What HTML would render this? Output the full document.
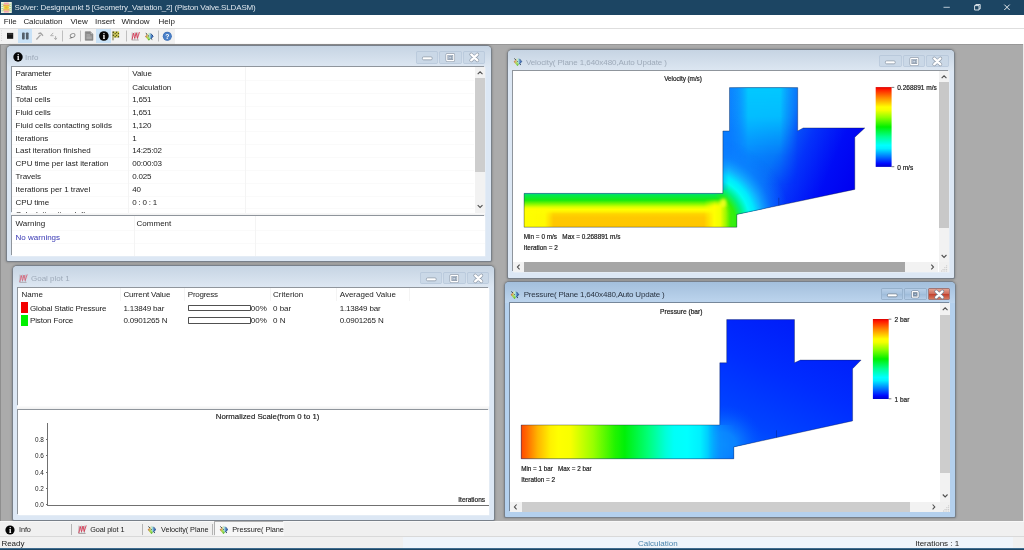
<!DOCTYPE html>
<html>
<head>
<meta charset="utf-8">
<title>Solver</title>
<style>
*{box-sizing:border-box;margin:0;padding:0}
html,body{width:1024px;height:550px;overflow:hidden;background:#ababab;font-family:"Liberation Sans",sans-serif;font-size:8px;color:#222}
#app{position:absolute;left:0;top:0;width:1024px;height:550px;overflow:hidden;background:#ababab;will-change:transform}
.a{position:absolute}
.tx{position:absolute;white-space:pre;line-height:10px;font-size:8px;color:#1c1c1c}
.ar{font-family:"Liberation Sans",sans-serif}
#titlebar{position:absolute;left:0;top:0;width:1024px;height:15px;background:#1c4563}
#menubar{position:absolute;left:0;top:15px;width:1024px;height:13.5px;background:#fff}
#toolbar{position:absolute;left:0;top:28.4px;width:1024px;height:15.2px;background:#fff;border-top:0.8px solid #dedede}
#tbline{position:absolute;left:0;top:43.5px;width:1024px;height:1.8px;background:linear-gradient(#8f8f8f,#a0a0a0)}
#tabs{position:absolute;left:0;top:521.4px;width:1024px;height:15.1px;background:#f0f0f0;border-top:1px solid #f8f8f8}
#status{position:absolute;left:0;top:536px;width:1024px;height:12.5px;background:#f0f0f0;border-top:1px solid #d9d9d9}
#bottomline{position:absolute;left:0;top:548.3px;width:1024px;height:1.7px;background:linear-gradient(#5d8cb3,#1c4563 55%)}
.win{position:absolute;border-radius:4.5px 4.5px 1px 1px;box-shadow:0 0 0 0.9px #78808a, 0 0.4px 2.4px 0.6px rgba(0,0,0,.3)}
.cap{position:absolute;left:0;top:0;right:0;height:21px;border-radius:4px 4px 0 0}
.inact{background:#dce7f4}
.capi{background:linear-gradient(#c6d4e3,#dde7f2)}
.act{background:#b4d0ed}
.capa{background:linear-gradient(#a3bfdc,#bdd5ee)}
.pane{position:absolute;background:#fff;box-shadow:-1px -1px 0 0 #8f959c, 0.6px 0.6px 0 0 #e9eef5;overflow:hidden}
.wb{position:absolute;height:10.8px;width:20.6px;border-radius:0.5px}
.wbi{background:#cad8e7;box-shadow:0 0 0 0.7px #b3c4d8}
.wba{background:linear-gradient(#b8cfe8,#a5c1de 50%,#9dbbd9 51%,#b5cde8);box-shadow:0 0 0 0.7px #8fa9c4}
.wba.cl{background:linear-gradient(#e2a393,#cf6a58 48%,#c2402e 52%,#d67a5e);box-shadow:0 0 0 0.7px #9c5b52}
.wb svg{position:absolute;left:0;top:0;width:100%;height:100%;overflow:visible}
.vl{position:absolute;width:1px;background:#f4f4f4}
.hl{position:absolute;height:1px;background:#fafafa}
.sbv{position:absolute;background:#f2f2f2}
.sbh{position:absolute;background:#f2f2f2}
.thumb{position:absolute;background:#cdcdcd}
</style>
</head>
<body>
<div id="app">
<div id="titlebar">
  <svg class="a" style="left:1.1px;top:1.9px" width="10.8" height="11.2" viewBox="0 0 21.6 22.4">
    <rect x="0" y="0" width="21.6" height="22.4" fill="#eef3e4"/>
    <g fill="#a9d99a"><rect x="0.8" y="3.4" width="20" height="2.2"/><rect x="0.8" y="7.8" width="20" height="2.2"/><rect x="0.8" y="12.2" width="20" height="2.2"/><rect x="0.8" y="16.6" width="20" height="2.2"/></g>
    <rect x="5" y="1" width="11.6" height="20.4" fill="#f3e7b0" opacity="0.85"/>
    <rect x="6" y="1.4" width="9.6" height="3.4" fill="#f2a2b4"/>
    <rect x="6" y="17.6" width="9.6" height="3.4" fill="#f2a2b4"/>
    <rect x="4.4" y="5.4" width="12.8" height="2.6" fill="#eda65c"/>
    <rect x="4.4" y="14.4" width="12.8" height="2.6" fill="#eda65c"/>
    <ellipse cx="10.8" cy="11.2" rx="5.4" ry="4" fill="#ecd23e"/>
    <ellipse cx="10.8" cy="11.2" rx="2.6" ry="2" fill="#e8b636"/>
  </svg>
  <span class="tx" style="left:14.6px;top:3.3px;color:#dde5ec;letter-spacing:-0.15px">Solver: Designpunkt 5 [Geometry_Variation_2] (Piston Valve.SLDASM)</span>
  <svg class="a" style="left:930px;top:0" width="94" height="15" viewBox="0 0 94 15">
    <path d="M13.5 7.3 H19.8" stroke="#c9d6e0" stroke-width="0.9" fill="none"/>
    <path d="M44.6 5.6 H49 V10 H44.6 Z M45.8 5.6 V4.5 H50.2 V8.9 H49" stroke="#e8eef3" stroke-width="0.9" fill="none"/>
    <path d="M74.3 4.6 L79.7 10 M79.7 4.6 L74.3 10" stroke="#f2f5f8" stroke-width="0.95" fill="none"/>
  </svg>
</div>
<div id="menubar">
  <span class="tx" style="left:3.8px;top:2.2px">File</span>
  <span class="tx" style="left:23.4px;top:2.2px;letter-spacing:-0.05px">Calculation</span>
  <span class="tx" style="left:70.6px;top:2.2px">View</span>
  <span class="tx" style="left:95px;top:2.2px">Insert</span>
  <span class="tx" style="left:121.6px;top:2.2px;letter-spacing:-0.1px">Window</span>
  <span class="tx" style="left:158.6px;top:2.2px">Help</span>
</div>
<div id="toolbar">
  <div class="a" style="left:0;top:0;width:175.4px;height:14.6px;background:#f2f2f2"></div>
  <div class="a" style="left:18.3px;top:0px;width:14px;height:13.6px;background:#c9e2f7"></div>
  <div class="a" style="left:96.4px;top:0px;width:14.6px;height:13.6px;background:#c9e2f7"></div>
  <svg class="a" style="left:0;top:-1px" width="180" height="15" viewBox="0 28.5 180 15">
    <!-- grip -->
    <g fill="#c8c8c8"><rect x="1.2" y="31" width="0.8" height="0.8"/><rect x="1.2" y="33.4" width="0.8" height="0.8"/><rect x="1.2" y="35.8" width="0.8" height="0.8"/><rect x="1.2" y="38.2" width="0.8" height="0.8"/><rect x="1.2" y="40.6" width="0.8" height="0.8"/></g>
    <!-- stop -->
    <rect x="7" y="33.4" width="6.2" height="5.9" fill="#161616"/>
    <rect x="7.6" y="34" width="5" height="1.2" fill="#3a3a3a"/>
    <!-- pause -->
    <rect x="22" y="33" width="2.7" height="7" rx="0.8" fill="#55606b"/>
    <rect x="25.9" y="33" width="2.7" height="7" rx="0.8" fill="#55606b"/>
    <!-- hammer -->
    <path d="M36.4 40 L40.6 35.3" stroke="#a3a3a3" stroke-width="1.2" fill="none"/>
    <path d="M38.3 34.2 L40.6 33.6 L43 36.2" stroke="#a3a3a3" stroke-width="1.3" fill="none"/>
    <!-- arrows -->
    <path d="M53.2 33.4 L50.6 36.2 L53.6 36.2" stroke="#b0b0b0" stroke-width="1" fill="none"/>
    <path d="M55.6 36.6 L55.6 40 M54.2 38.4 L55.6 40.2 L57 38.4" stroke="#b0b0b0" stroke-width="1" fill="none"/>
    <!-- sep -->
    <rect x="62" y="31" width="0.9" height="11" fill="#b9b9b9"/>
    <!-- eraser -->
    <ellipse cx="72.6" cy="36" rx="2.5" ry="1.8" transform="rotate(-30 72.6 36)" fill="none" stroke="#8d8d8d" stroke-width="0.9"/>
    <path d="M69 39.3 L71.6 37.2 L72.4 38.4 Z" fill="#6f6f6f"/>
    <rect x="80.1" y="31" width="0.9" height="11" fill="#b9b9b9"/>
    <!-- doc -->
    <path d="M85.3 32.2 H90.4 L92.9 34.7 V40.8 H85.3 Z" fill="#8b8b8b" stroke="#6a6a6a" stroke-width="0.5"/>
    <path d="M90.4 32.2 V34.7 H92.9" fill="#c9c9c9" stroke="#6a6a6a" stroke-width="0.4"/>
    <g stroke="#c6c6c6" stroke-width="0.6"><path d="M86.4 35.3H90M86.4 36.6H91.8M86.4 37.9H91.8M86.4 39.2H91.8"/></g>
    <!-- info -->
    <circle cx="103.9" cy="36.5" r="4.8" fill="#050505"/>
    <text x="104" y="39.5" font-family="Liberation Serif, serif" font-weight="bold" font-size="8.6" fill="#fff" text-anchor="middle">i</text>
    <!-- flag -->
    <g fill="#55560e">
      <rect x="112.7" y="32" width="1.6" height="1.5"/><rect x="115.9" y="32" width="1.6" height="1.5"/>
      <rect x="114.3" y="33.5" width="1.6" height="1.5"/><rect x="117.5" y="33.5" width="1.6" height="1.5"/>
      <rect x="112.7" y="35" width="1.6" height="1.5"/><rect x="115.9" y="35" width="1.6" height="1.5"/>
      <rect x="114.3" y="36.5" width="1.6" height="1.5"/><rect x="117.5" y="36.5" width="1.6" height="1.5"/>
      <rect x="112.6" y="32" width="0.8" height="8.8"/>
    </g>
    <g fill="#cfc83a">
      <rect x="114.3" y="32" width="1.6" height="1.5"/><rect x="117.5" y="32" width="1.6" height="1.5"/>
      <rect x="113.4" y="33.5" width="0.9" height="1.5"/><rect x="115.9" y="33.5" width="1.6" height="1.5"/>
      <rect x="114.3" y="35" width="1.6" height="1.5"/><rect x="117.5" y="35" width="1.6" height="1.5"/>
      <rect x="113.4" y="36.5" width="0.9" height="1.5"/><rect x="115.9" y="36.5" width="1.6" height="1.5"/>
    </g>
    <rect x="126" y="31" width="0.9" height="11" fill="#b9b9b9"/>
    <!-- goal plot icon -->
    <svg x="131.2" y="32.2" width="9" height="9" viewBox="0 0 9 9">
      <path d="M0.9 0.6V8.2M3.6 0.6V8.2M6.4 0.6V8.2" stroke="#9a9094" stroke-width="0.55" fill="none"/>
      <path d="M0.8 8 L2.2 1.4 L3.5 6.6 L5 1 L6.2 6.6 L8.2 0.4" stroke="#d43c56" stroke-width="0.95" fill="none" stroke-linejoin="round"/>
      <path d="M0.6 4.4 L2.4 4 L4.4 5.2 L6.2 3.4 L8.2 3" stroke="#e58a9a" stroke-width="0.6" fill="none"/>
      <path d="M0.4 8.4 H7.6" stroke="#8a7e82" stroke-width="0.7"/>
    </svg>
    <!-- results icon -->
    <svg x="144.4" y="32.2" width="9.4" height="9.4" viewBox="0 0 9.4 9.4">
      <defs><linearGradient id="rg0" x1="0" y1="0" x2="1" y2="0"><stop offset="0" stop-color="#a85828"/><stop offset="0.2" stop-color="#e0a050"/><stop offset="0.42" stop-color="#dcecc4"/><stop offset="0.6" stop-color="#98dcd8"/><stop offset="0.8" stop-color="#4878c8"/><stop offset="1" stop-color="#2848a8"/></linearGradient></defs>
      <path d="M0.7 4.7 L4.5 0.7 L8.6 4.7 L4.5 8.9 Z" fill="url(#rg0)"/>
      <path d="M1.8 5.8 L4.5 8.9 L6 7.2 L3.6 4.6 Z" fill="#9cd848" opacity="0.85"/><path d="M3.2 7.4 L4.5 8.9 L5.6 7.6 Z" fill="#48b030" opacity="0.9"/>
      <path d="M1.4 1.6 L2.8 2.8 M3.8 4 L4.6 4.6 M6.8 7 L7.8 7.8" stroke="#1e2a26" stroke-width="1" fill="none"/>
      <path d="M6.4 1.8 L8.8 4.6 L6.8 6.6 M7.4 7.4 L6.6 6.6" stroke="#1d4a86" stroke-width="1" fill="none"/>
    </svg>
    <rect x="158" y="31" width="0.9" height="11" fill="#b9b9b9"/>
    <!-- help -->
    <circle cx="167.3" cy="36.8" r="4.5" fill="#3b6db3"/>
    <circle cx="167.3" cy="36.8" r="3.9" fill="#4a80c8"/>
    <text x="167.3" y="39.3" font-size="6.8" font-weight="bold" fill="#fff" text-anchor="middle" font-family="Liberation Sans, sans-serif">?</text>
  </svg>
</div>
<div id="tbline"></div>

<div class="a" id="lcol" style="left:0;top:45px;width:1.1px;height:476px;background:#8e8e8e"></div>
<div class="a" style="left:1023.2px;top:44px;width:0.8px;height:477px;background:#ececec"></div>

<!-- Info window -->
<div class="win inact" style="left:6.75px;top:46.1px;width:483.95px;height:214.80px"><div class="cap capi"></div></div>
<svg class="a" style="left:11.5px;top:51.2px" width="12" height="12" viewBox="-6 -6 12 12"><circle cx="0" cy="0" r="4.7" fill="#050505"/><text x="0.1" y="3" font-family="Liberation Serif, serif" font-weight="bold" font-size="8.6" fill="#fff" text-anchor="middle">i</text></svg>
<span class="tx" style="left:25px;top:53.00px;color:#9eaab9">Info</span>
<div class="wb wbi" style="left:416.70px;top:52.00px"><svg viewBox="0.5 0.75 20.6 10.8"><rect x="5.9" y="5.6" width="9.8" height="3" rx="1.2" fill="#fff" stroke="#8d99a8" stroke-width="0.8"/></svg></div>
<div class="wb wbi" style="left:440.20px;top:52.00px"><svg viewBox="0.5 0.75 20.6 10.8"><rect x="7.3" y="3.1" width="7" height="6.2" rx="0.6" fill="#c8d6e6" stroke="#8d99a8" stroke-width="2.5"/><rect x="7.3" y="3.1" width="7" height="6.2" rx="0.6" fill="none" stroke="#fff" stroke-width="1.25"/><rect x="9.4" y="5.2" width="2.8" height="2.4" fill="none" stroke="#8d99a8" stroke-width="0.7"/></svg></div>
<div class="wb wbi cl" style="left:463.70px;top:52.00px"><svg viewBox="0.5 0.75 20.6 10.8"><path d="M7.7 3.2 L13.9 9.1 M13.9 3.2 L7.7 9.1" stroke="#8d99a8" stroke-width="3.6" stroke-linecap="round" fill="none"/><path d="M7.7 3.2 L13.9 9.1 M13.9 3.2 L7.7 9.1" stroke="#fff" stroke-width="2.3" stroke-linecap="round" fill="none"/></svg></div>
<div class="pane" style="left:12px;top:67px;width:473px;height:145.5px"></div>
<span class="tx" style="left:15.6px;top:69.20px;letter-spacing:-0.2px">Parameter</span>
<span class="tx" style="left:132.2px;top:69.20px;letter-spacing:-0.05px">Value</span>
<div class="hl" style="left:12px;top:79.60px;width:462px"></div>
<span class="tx" style="left:15.6px;top:82.70px;letter-spacing:-0.2px">Status</span>
<span class="tx" style="left:132.2px;top:82.70px;letter-spacing:-0.05px">Calculation</span>
<div class="hl" style="left:12px;top:93.10px;width:462px"></div>
<span class="tx" style="left:15.6px;top:95.20px;letter-spacing:-0.02px">Total cells</span>
<span class="tx" style="left:132.2px;top:95.20px;letter-spacing:-0.2px">1,651</span>
<div class="hl" style="left:12px;top:105.60px;width:462px"></div>
<span class="tx" style="left:15.6px;top:108.20px;letter-spacing:-0.05px">Fluid cells</span>
<span class="tx" style="left:132.2px;top:108.20px;letter-spacing:-0.2px">1,651</span>
<div class="hl" style="left:12px;top:118.60px;width:462px"></div>
<span class="tx" style="left:15.6px;top:120.70px;letter-spacing:-0.02px">Fluid cells contacting solids</span>
<span class="tx" style="left:132.2px;top:120.70px;letter-spacing:-0.2px">1,120</span>
<div class="hl" style="left:12px;top:131.10px;width:462px"></div>
<span class="tx" style="left:15.6px;top:133.70px;letter-spacing:-0.02px">Iterations</span>
<span class="tx" style="left:132.2px;top:133.70px;letter-spacing:-0.2px">1</span>
<div class="hl" style="left:12px;top:144.10px;width:462px"></div>
<span class="tx" style="left:15.6px;top:146.20px;letter-spacing:-0.02px">Last iteration finished</span>
<span class="tx" style="left:132.2px;top:146.20px;letter-spacing:-0.2px">14:25:02</span>
<div class="hl" style="left:12px;top:156.60px;width:462px"></div>
<span class="tx" style="left:15.6px;top:159.20px;letter-spacing:-0.02px">CPU time per last iteration</span>
<span class="tx" style="left:132.2px;top:159.20px;letter-spacing:-0.2px">00:00:03</span>
<div class="hl" style="left:12px;top:169.60px;width:462px"></div>
<span class="tx" style="left:15.6px;top:172.20px;letter-spacing:-0.1px">Travels</span>
<span class="tx" style="left:132.2px;top:172.20px;letter-spacing:-0.2px">0.025</span>
<div class="hl" style="left:12px;top:182.60px;width:462px"></div>
<span class="tx" style="left:15.6px;top:185.20px;letter-spacing:-0.02px">Iterations per 1 travel</span>
<span class="tx" style="left:132.2px;top:185.20px;letter-spacing:-0.2px">40</span>
<div class="hl" style="left:12px;top:195.60px;width:462px"></div>
<span class="tx" style="left:15.6px;top:197.70px;letter-spacing:-0.1px">CPU time</span>
<span class="tx" style="left:132.2px;top:197.70px;letter-spacing:-0.2px">0 : 0 : 1</span>
<div class="hl" style="left:12px;top:208.10px;width:462px"></div>
<div class="a" style="left:12px;top:208.5px;width:462px;height:4px;overflow:hidden"><span class="tx" style="left:3.6px;top:1.6px">Calculation time left</span></div>
<div class="vl" style="left:127.5px;top:67px;height:145.5px"></div>
<div class="vl" style="left:245px;top:67px;height:145.5px"></div>
<div class="sbv" style="left:474.8px;top:67px;width:10.20px;height:145.50px"><div class="thumb" style="left:0;top:11.00px;width:10.20px;height:94.00px;background:#cdcdcd"></div><svg class="a" style="left:0;top:0" width="10.20" height="145.50"><path d="M2.6999999999999944 7.2 L5.099999999999994 4.8 L7.499999999999995 7.2" stroke="#505050" stroke-width="1.1" fill="none"/><path d="M2.6999999999999944 138.1 L5.099999999999994 140.5 L7.499999999999995 138.1" stroke="#505050" stroke-width="1.1" fill="none"/></svg></div>
<div class="a" style="left:11px;top:212.5px;width:474px;height:3px;background:linear-gradient(#fafafa,#ededed)"></div>
<div class="pane" style="left:12px;top:216.3px;width:473px;height:39.3px"></div>
<span class="tx" style="left:15.6px;top:219.30px">Warning</span>
<span class="tx" style="left:136.6px;top:219.30px">Comment</span>
<span class="tx" style="left:15.6px;top:232.50px;color:#3838b4">No warnings</span>
<div class="hl" style="left:12px;top:229.8px;width:473px"></div>
<div class="hl" style="left:12px;top:242.7px;width:473px"></div>
<div class="vl" style="left:133.5px;top:216.3px;height:39.3px"></div>
<div class="vl" style="left:255px;top:216.3px;height:39.3px"></div>
<!-- Goal plot window -->
<div class="win inact" style="left:13.1px;top:266.3px;width:480.80px;height:253.40px"><div class="cap capi"></div></div>
<svg class="a" style="left:19.3px;top:273.5px;opacity:0.75" width="9" height="9" viewBox="0 0 9 9"><path d="M0.9 0.6V8.2M3.6 0.6V8.2M6.4 0.6V8.2" stroke="#9a9094" stroke-width="0.55" fill="none"/><path d="M0.8 8 L2.2 1.4 L3.5 6.6 L5 1 L6.2 6.6 L8.2 0.4" stroke="#d43c56" stroke-width="0.95" fill="none" stroke-linejoin="round"/><path d="M0.6 4.4 L2.4 4 L4.4 5.2 L6.2 3.4 L8.2 3" stroke="#e58a9a" stroke-width="0.6" fill="none"/><path d="M0.4 8.4 H7.6" stroke="#8a7e82" stroke-width="0.7"/></svg>
<span class="tx" style="left:31px;top:274.40px;color:#9eaab9">Goal plot 1</span>
<div class="wb wbi" style="left:420.70px;top:272.70px"><svg viewBox="0.5 0.75 20.6 10.8"><rect x="5.9" y="5.6" width="9.8" height="3" rx="1.2" fill="#fff" stroke="#8d99a8" stroke-width="0.8"/></svg></div>
<div class="wb wbi" style="left:444.20px;top:272.70px"><svg viewBox="0.5 0.75 20.6 10.8"><rect x="7.3" y="3.1" width="7" height="6.2" rx="0.6" fill="#c8d6e6" stroke="#8d99a8" stroke-width="2.5"/><rect x="7.3" y="3.1" width="7" height="6.2" rx="0.6" fill="none" stroke="#fff" stroke-width="1.25"/><rect x="9.4" y="5.2" width="2.8" height="2.4" fill="none" stroke="#8d99a8" stroke-width="0.7"/></svg></div>
<div class="wb wbi cl" style="left:467.70px;top:272.70px"><svg viewBox="0.5 0.75 20.6 10.8"><path d="M7.7 3.2 L13.9 9.1 M13.9 3.2 L7.7 9.1" stroke="#8d99a8" stroke-width="3.6" stroke-linecap="round" fill="none"/><path d="M7.7 3.2 L13.9 9.1 M13.9 3.2 L7.7 9.1" stroke="#fff" stroke-width="2.3" stroke-linecap="round" fill="none"/></svg></div>
<div class="pane" style="left:18.4px;top:287.6px;width:471px;height:118.4px"></div>
<span class="tx" style="left:21.6px;top:290.10px">Name</span>
<span class="tx" style="left:123.4px;top:290.10px;letter-spacing:-0.15px">Current Value</span>
<span class="tx" style="left:187.8px;top:290.10px;letter-spacing:-0.25px">Progress</span>
<span class="tx" style="left:273px;top:290.10px">Criterion</span>
<span class="tx" style="left:339.7px;top:290.10px">Averaged Value</span>
<div class="vl" style="left:119.5px;top:287.6px;height:13.5px"></div>
<div class="vl" style="left:184px;top:287.6px;height:13.5px"></div>
<div class="vl" style="left:269.5px;top:287.6px;height:13.5px"></div>
<div class="vl" style="left:336.3px;top:287.6px;height:13.5px"></div>
<div class="vl" style="left:409.4px;top:287.6px;height:13.5px"></div>
<div class="a" style="left:20.9px;top:302.00px;width:7.2px;height:11.4px;background:#f40000"></div>
<span class="tx" style="left:30px;top:303.50px;letter-spacing:-0.15px">Global Static Pressure</span>
<span class="tx" style="left:123.4px;top:303.50px;letter-spacing:-0.18px">1.13849 bar</span>
<div class="a" style="left:187.8px;top:304.50px;width:62.8px;height:6.4px;background:#fff;border:0.75px solid #505050;border-radius:0.8px"></div>
<span class="tx" style="left:250.8px;top:303.50px">00%</span>
<span class="tx" style="left:273px;top:303.50px">0 bar</span>
<span class="tx" style="left:339.7px;top:303.50px;letter-spacing:-0.18px">1.13849 bar</span>
<div class="a" style="left:20.9px;top:314.80px;width:7.2px;height:11.4px;background:#00f000"></div>
<span class="tx" style="left:30px;top:316.30px;letter-spacing:-0.15px">Piston Force</span>
<span class="tx" style="left:123.4px;top:316.30px;letter-spacing:-0.18px">0.0901265 N</span>
<div class="a" style="left:187.8px;top:317.30px;width:62.8px;height:6.4px;background:#fff;border:0.75px solid #505050;border-radius:0.8px"></div>
<span class="tx" style="left:250.8px;top:316.30px">00%</span>
<span class="tx" style="left:273px;top:316.30px">0 N</span>
<span class="tx" style="left:339.7px;top:316.30px;letter-spacing:-0.18px">0.0901265 N</span>
<div class="a" style="left:17.4px;top:406px;width:472px;height:3.6px;background:linear-gradient(#fcfcfc,#ececec)"></div>
<div class="pane" style="left:18.4px;top:410.4px;width:471px;height:104.4px"></div>
<span class="tx" style="left:215.8px;top:412.00px;font-size:7.8px;color:#0c0c0c;-webkit-text-stroke:0.15px #333">Normalized Scale(from 0 to 1)</span>
<div class="a" style="left:47px;top:423.4px;width:0.9px;height:82px;background:#707070"></div>
<div class="a" style="left:47px;top:504.5px;width:441.6px;height:0.9px;background:#707070"></div>
<span class="tx" style="left:34.9px;top:435.10px;font-size:6.4px;color:#222">0.8</span>
<div class="a" style="left:45.8px;top:439.20px;width:1.4px;height:0.8px;background:#707070"></div>
<span class="tx" style="left:34.9px;top:451.35px;font-size:6.4px;color:#222">0.6</span>
<div class="a" style="left:45.8px;top:455.45px;width:1.4px;height:0.8px;background:#707070"></div>
<span class="tx" style="left:34.9px;top:467.60px;font-size:6.4px;color:#222">0.4</span>
<div class="a" style="left:45.8px;top:471.70px;width:1.4px;height:0.8px;background:#707070"></div>
<span class="tx" style="left:34.9px;top:483.85px;font-size:6.4px;color:#222">0.2</span>
<div class="a" style="left:45.8px;top:487.95px;width:1.4px;height:0.8px;background:#707070"></div>
<span class="tx" style="left:34.9px;top:500.10px;font-size:6.4px;color:#222">0.0</span>
<div class="a" style="left:45.8px;top:504.20px;width:1.4px;height:0.8px;background:#707070"></div>
<span class="tx" style="left:458.3px;top:494.70px;font-size:6.5px;color:#0c0c0c;-webkit-text-stroke:0.2px #333">Iterations</span>
<!-- Velocity window -->
<div class="win inact" style="left:507.9px;top:49.8px;width:446.00px;height:227.90px"><div class="cap capi"></div></div>
<svg class="a" style="left:513.3px;top:57.2px;opacity:0.9" width="9.4" height="9.4" viewBox="0 0 9.4 9.4"><defs><linearGradient id="rg1" x1="0" y1="0" x2="1" y2="0"><stop offset="0" stop-color="#a85828"/><stop offset="0.2" stop-color="#e0a050"/><stop offset="0.42" stop-color="#dcecc4"/><stop offset="0.6" stop-color="#98dcd8"/><stop offset="0.8" stop-color="#4878c8"/><stop offset="1" stop-color="#2848a8"/></linearGradient></defs><path d="M0.7 4.7 L4.5 0.7 L8.6 4.7 L4.5 8.9 Z" fill="url(#rg1)"/><path d="M1.8 5.8 L4.5 8.9 L6 7.2 L3.6 4.6 Z" fill="#9cd848" opacity="0.85"/><path d="M3.2 7.4 L4.5 8.9 L5.6 7.6 Z" fill="#48b030" opacity="0.9"/><path d="M1.4 1.6 L2.8 2.8 M3.8 4 L4.6 4.6 M6.8 7 L7.8 7.8" stroke="#1e2a26" stroke-width="1" fill="none"/><path d="M6.4 1.8 L8.8 4.6 L6.8 6.6 M7.4 7.4 L6.6 6.6" stroke="#1d4a86" stroke-width="1" fill="none"/></svg>
<span class="tx" style="left:525.9px;top:57.50px;color:#9eaab9;letter-spacing:-0.08px">Velocity( Plane 1,640x480,Auto Update )</span>
<div class="wb wbi" style="left:880.20px;top:55.70px"><svg viewBox="0.5 0.75 20.6 10.8"><rect x="5.9" y="5.6" width="9.8" height="3" rx="1.2" fill="#fff" stroke="#8d99a8" stroke-width="0.8"/></svg></div>
<div class="wb wbi" style="left:903.70px;top:55.70px"><svg viewBox="0.5 0.75 20.6 10.8"><rect x="7.3" y="3.1" width="7" height="6.2" rx="0.6" fill="#c8d6e6" stroke="#8d99a8" stroke-width="2.5"/><rect x="7.3" y="3.1" width="7" height="6.2" rx="0.6" fill="none" stroke="#fff" stroke-width="1.25"/><rect x="9.4" y="5.2" width="2.8" height="2.4" fill="none" stroke="#8d99a8" stroke-width="0.7"/></svg></div>
<div class="wb wbi cl" style="left:927.20px;top:55.70px"><svg viewBox="0.5 0.75 20.6 10.8"><path d="M7.7 3.2 L13.9 9.1 M13.9 3.2 L7.7 9.1" stroke="#8d99a8" stroke-width="3.6" stroke-linecap="round" fill="none"/><path d="M7.7 3.2 L13.9 9.1 M13.9 3.2 L7.7 9.1" stroke="#fff" stroke-width="2.3" stroke-linecap="round" fill="none"/></svg></div>
<div class="pane" style="left:513.2px;top:70.8px;width:435.40px;height:201.50px"></div>
<svg class="a" style="left:513.2px;top:70.8px" width="425.30" height="191.40" viewBox="513.2 70.8 425.30 191.40">
<defs>
<clipPath id="vclip"><polygon points="524.3,193.2 723.1,193.2 723.1,130.8 729.7,130.8 729.7,87.4 797.9,87.4 797.9,130.8 803.4,127.8 865,127.8 855,137 855,189.2 737,214.2 737,227 524.3,227"/></clipPath>
<linearGradient id="vbase" gradientUnits="userSpaceOnUse" x1="723" y1="190" x2="834.3" y2="237.2">
<stop offset="0" stop-color="#0a7cff"/><stop offset="0.28" stop-color="#0866f8"/><stop offset="0.5" stop-color="#0432fa"/><stop offset="0.75" stop-color="#000cf6"/><stop offset="1" stop-color="#0000f0"/></linearGradient>
<linearGradient id="vtube" gradientUnits="userSpaceOnUse" x1="729.8" y1="0" x2="798.2" y2="0">
<stop offset="0" stop-color="#0aa0ff" stop-opacity="0"/><stop offset="0.12" stop-color="#0aa4ff" stop-opacity="0.5"/><stop offset="0.27" stop-color="#02c8ff" stop-opacity="1"/><stop offset="0.74" stop-color="#02c8ff" stop-opacity="1"/><stop offset="0.9" stop-color="#0aa4ff" stop-opacity="0.5"/><stop offset="1" stop-color="#0aa0ff" stop-opacity="0"/></linearGradient>
<linearGradient id="vtedge" gradientUnits="userSpaceOnUse" x1="0" y1="87" x2="0" y2="131"><stop offset="0" stop-color="#18a0ff" stop-opacity="0.22"/><stop offset="0.5" stop-color="#18a0ff" stop-opacity="0.16"/><stop offset="1" stop-color="#18a0ff" stop-opacity="0"/></linearGradient>
<linearGradient id="vtubefade" gradientUnits="userSpaceOnUse" x1="0" y1="87" x2="0" y2="185">
<stop offset="0" stop-color="#fff" stop-opacity="1"/><stop offset="0.3" stop-color="#fff" stop-opacity="0.85"/><stop offset="0.5" stop-color="#fff" stop-opacity="0.5"/><stop offset="0.7" stop-color="#fff" stop-opacity="0.2"/><stop offset="1" stop-color="#fff" stop-opacity="0"/></linearGradient>
<mask id="vtm" maskUnits="userSpaceOnUse" x="700" y="80" width="140" height="130"><rect x="700" y="80" width="140" height="130" fill="url(#vtubefade)"/></mask>
<radialGradient id="vcorner" gradientUnits="userSpaceOnUse" cx="705" cy="222" r="90">
<stop offset="0" stop-color="#60f000" stop-opacity="0"/><stop offset="0.27" stop-color="#60f000" stop-opacity="0"/><stop offset="0.34" stop-color="#30ee08" stop-opacity="1"/><stop offset="0.42" stop-color="#00f088"/>
<stop offset="0.5" stop-color="#00fcf4"/><stop offset="0.56" stop-color="#00e8ff"/><stop offset="0.64" stop-color="#12b4ff" stop-opacity="0.9"/><stop offset="0.76" stop-color="#0c88ff" stop-opacity="0.5"/><stop offset="0.95" stop-color="#0a70ff" stop-opacity="0"/></radialGradient>
<linearGradient id="vcm" gradientUnits="userSpaceOnUse" x1="714" y1="0" x2="729" y2="0"><stop offset="0" stop-color="#fff" stop-opacity="0"/><stop offset="1" stop-color="#fff" stop-opacity="1"/></linearGradient>
<mask id="vcmask" maskUnits="userSpaceOnUse" x="600" y="100" width="200" height="140"><rect x="600" y="100" width="200" height="140" fill="url(#vcm)"/></mask>
<linearGradient id="vpipe" gradientUnits="userSpaceOnUse" x1="0" y1="193.25" x2="0" y2="226.9">
<stop offset="0" stop-color="#00dc80"/><stop offset="0.06" stop-color="#04e84c"/><stop offset="0.2" stop-color="#18ea10"/><stop offset="0.31" stop-color="#80f800"/><stop offset="0.4" stop-color="#d8ff00"/><stop offset="0.48" stop-color="#ffff00"/><stop offset="0.55" stop-color="#ffee00"/><stop offset="0.61" stop-color="#ffd400"/><stop offset="0.72" stop-color="#ffc800"/><stop offset="1" stop-color="#ffc600"/></linearGradient>
<linearGradient id="vpipeL" gradientUnits="userSpaceOnUse" x1="524" y1="0" x2="554" y2="0">
<stop offset="0" stop-color="#ffff00" stop-opacity="1"/><stop offset="0.7" stop-color="#ffff00" stop-opacity="0.9"/><stop offset="1" stop-color="#ffff00" stop-opacity="0"/></linearGradient>
<linearGradient id="vpipeLm" gradientUnits="userSpaceOnUse" x1="0" y1="193" x2="0" y2="227">
<stop offset="0" stop-color="#fff" stop-opacity="0"/><stop offset="0.4" stop-color="#fff" stop-opacity="0"/><stop offset="0.55" stop-color="#fff" stop-opacity="1"/><stop offset="1" stop-color="#fff" stop-opacity="1"/></linearGradient>
<mask id="vplm" maskUnits="userSpaceOnUse" x="520" y="190" width="60" height="40"><rect x="520" y="190" width="60" height="40" fill="url(#vpipeLm)"/></mask>
<linearGradient id="vpipeR" gradientUnits="userSpaceOnUse" x1="704" y1="0" x2="737" y2="0">
<stop offset="0" stop-color="#ffff00" stop-opacity="0"/><stop offset="0.32" stop-color="#ffff00" stop-opacity="1"/><stop offset="0.5" stop-color="#f0ff00"/><stop offset="0.66" stop-color="#a0f800"/><stop offset="0.82" stop-color="#30ee08"/><stop offset="1" stop-color="#10ea50"/></linearGradient>
<linearGradient id="vpipeRm" gradientUnits="userSpaceOnUse" x1="0" y1="193" x2="0" y2="227">
<stop offset="0" stop-color="#fff" stop-opacity="0"/><stop offset="0.15" stop-color="#fff" stop-opacity="0"/><stop offset="0.42" stop-color="#fff" stop-opacity="1"/><stop offset="1" stop-color="#fff" stop-opacity="1"/></linearGradient>
<mask id="vprm" maskUnits="userSpaceOnUse" x="680" y="190" width="60" height="40"><rect x="680" y="190" width="60" height="40" fill="url(#vpipeRm)"/></mask>
<filter id="vblur" x="-30%" y="-30%" width="160%" height="160%"><feGaussianBlur stdDeviation="1.6"/></filter>
<linearGradient id="rb" x1="0" y1="0" x2="0" y2="1"><stop offset="0" stop-color="#d80000"/><stop offset="0.025" stop-color="#ff1400"/><stop offset="0.13" stop-color="#ff8800"/><stop offset="0.25" stop-color="#ffff00"/><stop offset="0.29" stop-color="#f4ff00"/><stop offset="0.38" stop-color="#90ff00"/><stop offset="0.5" stop-color="#00f000"/><stop offset="0.62" stop-color="#00ff90"/><stop offset="0.73" stop-color="#00ffff"/><stop offset="0.77" stop-color="#00f0ff"/><stop offset="0.87" stop-color="#0078ff"/><stop offset="0.96" stop-color="#0008ff"/><stop offset="1" stop-color="#0000c8"/></linearGradient>
</defs>
<g clip-path="url(#vclip)">
<rect x="520" y="80" width="350" height="150" fill="url(#vbase)"/>
<rect x="729.8" y="80" width="68.4" height="51" fill="url(#vtedge)"/>
<rect x="729.8" y="80" width="68.4" height="110" fill="url(#vtube)" mask="url(#vtm)"/>
<rect x="520" y="190" width="217" height="40" fill="url(#vpipe)"/>
<rect x="520" y="190" width="40" height="40" fill="url(#vpipeL)" mask="url(#vplm)"/>
<rect x="700" y="190" width="37" height="40" fill="url(#vpipeR)" mask="url(#vprm)"/>
<circle cx="705" cy="222" r="90" fill="url(#vcorner)" mask="url(#vcmask)"/>
<ellipse cx="723.5" cy="202.5" rx="3.2" ry="4.2" fill="#ffff20" opacity="0.8" filter="url(#vblur)"/>
</g>
<polygon points="524.3,193.2 723.1,193.2 723.1,130.8 729.7,130.8 729.7,87.4 797.9,87.4 797.9,130.8 803.4,127.8 865,127.8 855,137 855,189.2 737,214.2 737,227 524.3,227" fill="none" stroke="#0a1a3a" stroke-width="0.45" stroke-opacity="0.85"/>
<path d="M779 205.3 V197.6" stroke="#0a1440" stroke-width="0.55" stroke-opacity="0.6"/>
<rect x="875.9" y="86.9" width="15.9" height="79.8" fill="url(#rb)"/>
<path d="M891.8 87.2 H894.5 M891.8 166.5 H894.5" stroke="#222" stroke-width="0.6"/>
</svg>
<span class="tx" style="left:664.2px;top:73.90px;font-size:6.4px;color:#0c0c0c;letter-spacing:-0.05px;-webkit-text-stroke:0.2px #333">Velocity (m/s)</span>
<span class="tx" style="left:897.2px;top:83.00px;font-size:6.55px;color:#0c0c0c;-webkit-text-stroke:0.2px #333">0.268891 m/s</span>
<span class="tx" style="left:897.2px;top:162.70px;font-size:6.55px;color:#0c0c0c;-webkit-text-stroke:0.2px #333">0 m/s</span>
<span class="tx" style="left:523.8px;top:232.00px;font-size:6.4px;color:#0c0c0c;-webkit-text-stroke:0.2px #333">Min = 0 m/s   Max = 0.268891 m/s</span>
<span class="tx" style="left:523.8px;top:242.70px;font-size:6.4px;color:#0c0c0c;-webkit-text-stroke:0.2px #333">Iteration = 2</span>
<div class="sbv" style="left:938.5px;top:70.8px;width:10.10px;height:191.40px"><div class="thumb" style="left:0;top:11.60px;width:10.10px;height:145.20px;background:#c8c8c8"></div><svg class="a" style="left:0;top:0" width="10.10" height="191.40"><path d="M2.6500000000000115 7.2 L5.050000000000011 4.8 L7.450000000000012 7.2" stroke="#505050" stroke-width="1.1" fill="none"/><path d="M2.6500000000000115 183.99999999999997 L5.050000000000011 186.39999999999998 L7.450000000000012 183.99999999999997" stroke="#505050" stroke-width="1.1" fill="none"/></svg></div>
<div class="sbh" style="left:513.2px;top:262.2px;width:425.30px;height:10.10px"><div class="thumb" style="top:0;left:11.10px;height:10.10px;width:381.10px;background:#a6a6a6"></div><svg class="a" style="left:0;top:0" width="425.30" height="10.10"><path d="M6.6 2.6500000000000115 L4.4 5.050000000000011 L6.6 7.450000000000012" stroke="#505050" stroke-width="1.1" fill="none"/><path d="M418.29999999999995 2.6500000000000115 L420.49999999999994 5.050000000000011 L418.29999999999995 7.450000000000012" stroke="#505050" stroke-width="1.1" fill="none"/></svg></div>
<div class="a" style="left:938.5px;top:262.2px;width:10.10px;height:10.10px;background:#f0f0f0"></div>
<svg class="a" style="left:941px;top:265px" width="7" height="7" viewBox="0 0 7 7"><g fill="#bfbfbf"><rect x="5.2" y="0.4" width="0.9" height="0.9"/><rect x="5.2" y="2.2" width="0.9" height="0.9"/><rect x="3.4" y="2.2" width="0.9" height="0.9"/><rect x="5.2" y="4" width="0.9" height="0.9"/><rect x="3.4" y="4" width="0.9" height="0.9"/><rect x="1.6" y="4" width="0.9" height="0.9"/><rect x="5.2" y="5.6" width="0.9" height="0.9"/><rect x="3.4" y="5.6" width="0.9" height="0.9"/><rect x="1.6" y="5.6" width="0.9" height="0.9"/><rect x="0" y="5.6" width="0.9" height="0.9"/></g></svg>
<!-- Pressure window -->
<div class="win act" style="left:505.2px;top:282.4px;width:449.70px;height:235.10px"><div class="cap capa"></div></div>
<svg class="a" style="left:510.3px;top:289.6px;opacity:1" width="9.4" height="9.4" viewBox="0 0 9.4 9.4"><defs><linearGradient id="rg2" x1="0" y1="0" x2="1" y2="0"><stop offset="0" stop-color="#a85828"/><stop offset="0.2" stop-color="#e0a050"/><stop offset="0.42" stop-color="#dcecc4"/><stop offset="0.6" stop-color="#98dcd8"/><stop offset="0.8" stop-color="#4878c8"/><stop offset="1" stop-color="#2848a8"/></linearGradient></defs><path d="M0.7 4.7 L4.5 0.7 L8.6 4.7 L4.5 8.9 Z" fill="url(#rg2)"/><path d="M1.8 5.8 L4.5 8.9 L6 7.2 L3.6 4.6 Z" fill="#9cd848" opacity="0.85"/><path d="M3.2 7.4 L4.5 8.9 L5.6 7.6 Z" fill="#48b030" opacity="0.9"/><path d="M1.4 1.6 L2.8 2.8 M3.8 4 L4.6 4.6 M6.8 7 L7.8 7.8" stroke="#1e2a26" stroke-width="1" fill="none"/><path d="M6.4 1.8 L8.8 4.6 L6.8 6.6 M7.4 7.4 L6.6 6.6" stroke="#1d4a86" stroke-width="1" fill="none"/></svg>
<span class="tx" style="left:523.7px;top:290.20px;color:#2a3442;letter-spacing:-0.2px">Pressure( Plane 1,640x480,Auto Update )</span>
<div class="wb wba" style="left:881.70px;top:288.50px"><svg viewBox="0.5 0.75 20.6 10.8"><rect x="5.9" y="5.6" width="9.8" height="3" rx="1.2" fill="#fff" stroke="#6f7f92" stroke-width="0.8"/></svg></div>
<div class="wb wba" style="left:905.20px;top:288.50px"><svg viewBox="0.5 0.75 20.6 10.8"><rect x="7.8" y="3.4" width="5.8" height="5.4" rx="0.6" fill="#a9c3df" stroke="#6f7f92" stroke-width="2.5"/><rect x="7.8" y="3.4" width="5.8" height="5.4" rx="0.6" fill="none" stroke="#fff" stroke-width="1.25"/><rect x="9.5" y="5" width="2.4" height="2.2" fill="none" stroke="#6f7f92" stroke-width="0.7"/></svg></div>
<div class="wb wba cl" style="left:928.70px;top:288.50px"><svg viewBox="0.5 0.75 20.6 10.8"><path d="M7.7 3.2 L13.9 9.1 M13.9 3.2 L7.7 9.1" stroke="#6f7f92" stroke-width="3.6" stroke-linecap="round" fill="none"/><path d="M7.7 3.2 L13.9 9.1 M13.9 3.2 L7.7 9.1" stroke="#fff" stroke-width="2.3" stroke-linecap="round" fill="none"/></svg></div>
<div class="pane" style="left:510.4px;top:303.3px;width:439.90px;height:208.70px;box-shadow:-1px -1px 0 0 #76879a"></div>
<svg class="a" style="left:510.4px;top:303.3px" width="429.60" height="198.90" viewBox="510.4 303.3 429.60 198.90">
<defs>
<clipPath id="pclip"><polygon points="521.6,425.3 720.2,425.3 720.2,363.1 727.1,363.1 727.1,319.9 794.9,319.9 794.9,363.1 800.8,360.4 861.5,360.4 853,369 853,421.2 734.2,447.2 734.2,459.1 521.6,459.1"/></clipPath>
<linearGradient id="pbase" gradientUnits="userSpaceOnUse" x1="800" y1="320" x2="740" y2="450">
<stop offset="0" stop-color="#001cf8"/><stop offset="0.4" stop-color="#002cff"/><stop offset="0.8" stop-color="#0044ff"/><stop offset="1" stop-color="#005cff"/></linearGradient>
<linearGradient id="ppipe" gradientUnits="userSpaceOnUse" x1="521.6" y1="0" x2="740" y2="0">
<stop offset="0" stop-color="#ff4800"/><stop offset="0.03" stop-color="#ff7000"/><stop offset="0.075" stop-color="#ffb400"/><stop offset="0.135" stop-color="#fff200"/><stop offset="0.17" stop-color="#ffff00"/><stop offset="0.226" stop-color="#f8ff00"/>
<stop offset="0.33" stop-color="#98ff00"/><stop offset="0.43" stop-color="#20f400"/><stop offset="0.474" stop-color="#00f008"/><stop offset="0.58" stop-color="#00ff78"/><stop offset="0.66" stop-color="#00ffd8"/><stop offset="0.7" stop-color="#00fff8"/><stop offset="0.76" stop-color="#00ffff"/>
<stop offset="0.82" stop-color="#00f0ff"/><stop offset="0.867" stop-color="#00c0ff"/><stop offset="0.91" stop-color="#0a94ff"/><stop offset="0.975" stop-color="#0a7cff"/><stop offset="1" stop-color="#0a78ff"/></linearGradient>
<radialGradient id="pcorner" gradientUnits="userSpaceOnUse" cx="724" cy="445" r="40">
<stop offset="0" stop-color="#0a8cff" stop-opacity="1"/><stop offset="0.3" stop-color="#0a84ff" stop-opacity="1"/><stop offset="0.55" stop-color="#0870ff" stop-opacity="0.7"/><stop offset="1" stop-color="#0050ff" stop-opacity="0"/></radialGradient>
<linearGradient id="pcm" gradientUnits="userSpaceOnUse" x1="694" y1="0" x2="712" y2="0"><stop offset="0" stop-color="#fff" stop-opacity="0"/><stop offset="1" stop-color="#fff" stop-opacity="1"/></linearGradient>
<mask id="pcmask" maskUnits="userSpaceOnUse" x="660" y="380" width="120" height="90"><rect x="660" y="380" width="120" height="90" fill="url(#pcm)"/></mask>
<linearGradient id="ppm" gradientUnits="userSpaceOnUse" x1="708" y1="0" x2="736" y2="0"><stop offset="0" stop-color="#fff"/><stop offset="1" stop-color="#fff" stop-opacity="0"/></linearGradient>
<mask id="ppmask" maskUnits="userSpaceOnUse" x="515" y="420" width="230" height="45"><rect x="515" y="420" width="230" height="45" fill="url(#ppm)"/></mask>
</defs>
<g clip-path="url(#pclip)">
<rect x="515" y="315" width="350" height="150" fill="url(#pbase)"/>
<circle cx="724" cy="445" r="40" fill="url(#pcorner)"/>
<rect x="515" y="425.3" width="230" height="40" fill="url(#ppipe)" mask="url(#ppmask)"/>
</g>
<polygon points="521.6,425.3 720.2,425.3 720.2,363.1 727.1,363.1 727.1,319.9 794.9,319.9 794.9,363.1 800.8,360.4 861.5,360.4 853,369 853,421.2 734.2,447.2 734.2,459.1 521.6,459.1" fill="none" stroke="#0a1a3a" stroke-width="0.45" stroke-opacity="0.8"/>
<path d="M776.9 438 V430.6" stroke="#0a1440" stroke-width="0.55" stroke-opacity="0.6"/>
<rect x="873.3" y="319.3" width="15.8" height="80" fill="url(#rb)"/>
<path d="M889.1 319.5 H891.8 M889.1 399.1 H891.8" stroke="#222" stroke-width="0.6"/>
</svg>
<span class="tx" style="left:660px;top:306.70px;font-size:6.65px;color:#0c0c0c;-webkit-text-stroke:0.2px #333">Pressure (bar)</span>
<span class="tx" style="left:894.5px;top:315.10px;font-size:6.5px;color:#0c0c0c;-webkit-text-stroke:0.2px #333">2 bar</span>
<span class="tx" style="left:894.5px;top:395.00px;font-size:6.5px;color:#0c0c0c;-webkit-text-stroke:0.2px #333">1 bar</span>
<span class="tx" style="left:521.2px;top:464.30px;font-size:6.3px;color:#0c0c0c;-webkit-text-stroke:0.2px #333">Min = 1 bar   Max = 2 bar</span>
<span class="tx" style="left:521.2px;top:475.40px;font-size:6.4px;color:#0c0c0c;-webkit-text-stroke:0.2px #333">Iteration = 2</span>
<div class="sbv" style="left:940px;top:303.3px;width:10.30px;height:198.90px"><div class="thumb" style="left:0;top:11.60px;width:10.30px;height:158.10px;background:#cdcdcd"></div><svg class="a" style="left:0;top:0" width="10.30" height="198.90"><path d="M2.7499999999999774 7.2 L5.149999999999977 4.8 L7.549999999999978 7.2" stroke="#505050" stroke-width="1.1" fill="none"/><path d="M2.7499999999999774 191.49999999999997 L5.149999999999977 193.89999999999998 L7.549999999999978 191.49999999999997" stroke="#505050" stroke-width="1.1" fill="none"/></svg></div>
<div class="sbh" style="left:510.4px;top:502.2px;width:429.60px;height:9.80px"><div class="thumb" style="top:0;left:11.20px;height:9.80px;width:388.80px;background:#cdcdcd"></div><svg class="a" style="left:0;top:0" width="429.60" height="9.80"><path d="M6.6 2.5000000000000058 L4.4 4.900000000000006 L6.6 7.300000000000006" stroke="#505050" stroke-width="1.1" fill="none"/><path d="M422.6 2.5000000000000058 L424.8 4.900000000000006 L422.6 7.300000000000006" stroke="#505050" stroke-width="1.1" fill="none"/></svg></div>
<div class="a" style="left:940px;top:502.2px;width:10.30px;height:9.80px;background:#f0f0f0"></div>
<svg class="a" style="left:942.5px;top:504.5px" width="7" height="7" viewBox="0 0 7 7"><g fill="#bfbfbf"><rect x="5.2" y="0.4" width="0.9" height="0.9"/><rect x="5.2" y="2.2" width="0.9" height="0.9"/><rect x="3.4" y="2.2" width="0.9" height="0.9"/><rect x="5.2" y="4" width="0.9" height="0.9"/><rect x="3.4" y="4" width="0.9" height="0.9"/><rect x="1.6" y="4" width="0.9" height="0.9"/><rect x="5.2" y="5.6" width="0.9" height="0.9"/><rect x="3.4" y="5.6" width="0.9" height="0.9"/><rect x="1.6" y="5.6" width="0.9" height="0.9"/><rect x="0" y="5.6" width="0.9" height="0.9"/></g></svg>
<div id="tabs"></div>
<div class="a" style="left:215.4px;top:522px;width:69px;height:14.3px;background:#f7f7f7;box-shadow:-0.9px -0.9px 0 0 #a8a8a8"></div>
<svg class="a" style="left:4.199999999999999px;top:523.5px" width="12" height="12" viewBox="-6 -6 12 12"><circle cx="0" cy="0" r="4.6" fill="#050505"/><text x="0.1" y="3" font-family="Liberation Serif, serif" font-weight="bold" font-size="8.6" fill="#fff" text-anchor="middle">i</text></svg>
<span class="tx" style="left:19px;top:525.20px;font-size:7.3px;letter-spacing:-0.1px">Info</span>
<div class="a" style="left:70.6px;top:523.5px;width:1.2px;height:11.5px;background:#b4b4b4"></div>
<svg class="a" style="left:77.6px;top:525px;opacity:1" width="9" height="9" viewBox="0 0 9 9"><path d="M0.9 0.6V8.2M3.6 0.6V8.2M6.4 0.6V8.2" stroke="#9a9094" stroke-width="0.55" fill="none"/><path d="M0.8 8 L2.2 1.4 L3.5 6.6 L5 1 L6.2 6.6 L8.2 0.4" stroke="#d43c56" stroke-width="0.95" fill="none" stroke-linejoin="round"/><path d="M0.6 4.4 L2.4 4 L4.4 5.2 L6.2 3.4 L8.2 3" stroke="#e58a9a" stroke-width="0.6" fill="none"/><path d="M0.4 8.4 H7.6" stroke="#8a7e82" stroke-width="0.7"/></svg>
<span class="tx" style="left:90.2px;top:525.20px;font-size:7.3px;letter-spacing:-0.1px">Goal plot 1</span>
<div class="a" style="left:141.6px;top:523.5px;width:1.2px;height:11.5px;background:#b4b4b4"></div>
<svg class="a" style="left:147px;top:525px;opacity:1" width="9.4" height="9.4" viewBox="0 0 9.4 9.4"><defs><linearGradient id="rg3" x1="0" y1="0" x2="1" y2="0"><stop offset="0" stop-color="#a85828"/><stop offset="0.2" stop-color="#e0a050"/><stop offset="0.42" stop-color="#dcecc4"/><stop offset="0.6" stop-color="#98dcd8"/><stop offset="0.8" stop-color="#4878c8"/><stop offset="1" stop-color="#2848a8"/></linearGradient></defs><path d="M0.7 4.7 L4.5 0.7 L8.6 4.7 L4.5 8.9 Z" fill="url(#rg3)"/><path d="M1.8 5.8 L4.5 8.9 L6 7.2 L3.6 4.6 Z" fill="#9cd848" opacity="0.85"/><path d="M3.2 7.4 L4.5 8.9 L5.6 7.6 Z" fill="#48b030" opacity="0.9"/><path d="M1.4 1.6 L2.8 2.8 M3.8 4 L4.6 4.6 M6.8 7 L7.8 7.8" stroke="#1e2a26" stroke-width="1" fill="none"/><path d="M6.4 1.8 L8.8 4.6 L6.8 6.6 M7.4 7.4 L6.6 6.6" stroke="#1d4a86" stroke-width="1" fill="none"/></svg>
<span class="tx" style="left:161px;top:525.20px;font-size:7.3px;letter-spacing:-0.05px">Velocity( Plane</span>
<div class="a" style="left:212.4px;top:523.5px;width:1px;height:11.5px;background:#b4b4b4"></div>
<svg class="a" style="left:218.5px;top:525px;opacity:1" width="9.4" height="9.4" viewBox="0 0 9.4 9.4"><defs><linearGradient id="rg4" x1="0" y1="0" x2="1" y2="0"><stop offset="0" stop-color="#a85828"/><stop offset="0.2" stop-color="#e0a050"/><stop offset="0.42" stop-color="#dcecc4"/><stop offset="0.6" stop-color="#98dcd8"/><stop offset="0.8" stop-color="#4878c8"/><stop offset="1" stop-color="#2848a8"/></linearGradient></defs><path d="M0.7 4.7 L4.5 0.7 L8.6 4.7 L4.5 8.9 Z" fill="url(#rg4)"/><path d="M1.8 5.8 L4.5 8.9 L6 7.2 L3.6 4.6 Z" fill="#9cd848" opacity="0.85"/><path d="M3.2 7.4 L4.5 8.9 L5.6 7.6 Z" fill="#48b030" opacity="0.9"/><path d="M1.4 1.6 L2.8 2.8 M3.8 4 L4.6 4.6 M6.8 7 L7.8 7.8" stroke="#1e2a26" stroke-width="1" fill="none"/><path d="M6.4 1.8 L8.8 4.6 L6.8 6.6 M7.4 7.4 L6.6 6.6" stroke="#1d4a86" stroke-width="1" fill="none"/></svg>
<span class="tx" style="left:232.3px;top:525.20px;font-size:7.3px;letter-spacing:-0.05px">Pressure( Plane</span>
<div id="status"><div class="a" style="left:403.4px;top:0;width:610px;height:11.5px;background:#eff4fa"></div></div>
<span class="tx" style="left:1.4px;top:539.30px">Ready</span>
<span class="tx" style="left:638px;top:539.30px;color:#4a84ad">Calculation</span>
<span class="tx" style="left:915.2px;top:539.30px">Iterations : 1</span>
<div id="bottomline"></div>
</div>
</body>
</html>
